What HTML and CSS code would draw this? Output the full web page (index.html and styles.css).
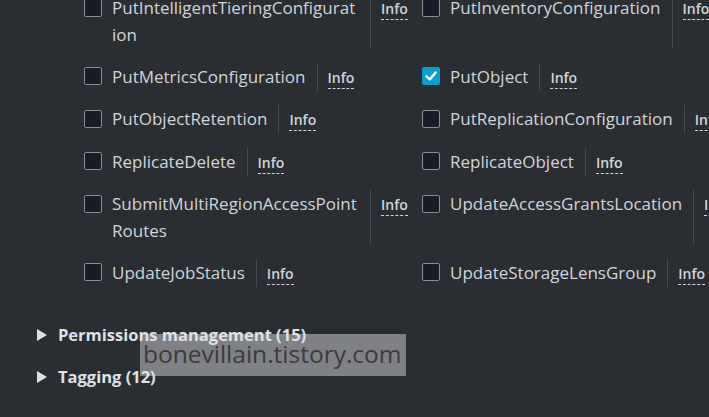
FILE: index.html
```html
<!DOCTYPE html>
<html lang="en">
<head>
  <meta charset="UTF-8">
  <title>Object actions</title>
  <link rel="stylesheet" href="styles.css">
</head>
<body>

<div class="action-grid">
  <div class="action">
    <span class="box"></span>
    <span class="name">PutIntelligentTieringConfiguration</span>
    <span class="info-wrap"><a class="info">Info</a></span>
  </div>
  <div class="action">
    <span class="box"></span>
    <span class="name">PutInventoryConfiguration</span>
    <span class="info-wrap"><a class="info">Info</a></span>
  </div>

  <div class="action">
    <span class="box"></span>
    <span class="name">PutMetricsConfiguration</span>
    <span class="info-wrap"><a class="info">Info</a></span>
  </div>
  <div class="action">
    <span class="box checked">
      <svg viewBox="0 0 18 18" width="18" height="18"><path d="M4.5 9.3 L7.7 12.4 L13.6 5.6" fill="none" stroke="#fff" stroke-width="2.4" stroke-linecap="round" stroke-linejoin="round"/></svg>
    </span>
    <span class="name">PutObject</span>
    <span class="info-wrap"><a class="info">Info</a></span>
  </div>

  <div class="action">
    <span class="box"></span>
    <span class="name">PutObjectRetention</span>
    <span class="info-wrap"><a class="info">Info</a></span>
  </div>
  <div class="action">
    <span class="box"></span>
    <span class="name">PutReplicationConfiguration</span>
    <span class="info-wrap"><a class="info">Info</a></span>
  </div>

  <div class="action">
    <span class="box"></span>
    <span class="name">ReplicateDelete</span>
    <span class="info-wrap"><a class="info">Info</a></span>
  </div>
  <div class="action">
    <span class="box"></span>
    <span class="name">ReplicateObject</span>
    <span class="info-wrap"><a class="info">Info</a></span>
  </div>

  <div class="action">
    <span class="box"></span>
    <span class="name">SubmitMultiRegionAccessPointRoutes</span>
    <span class="info-wrap"><a class="info">Info</a></span>
  </div>
  <div class="action">
    <span class="box"></span>
    <span class="name">UpdateAccessGrantsLocation</span>
    <span class="info-wrap"><a class="info">Info</a></span>
  </div>

  <div class="action">
    <span class="box"></span>
    <span class="name">UpdateJobStatus</span>
    <span class="info-wrap"><a class="info">Info</a></span>
  </div>
  <div class="action">
    <span class="box"></span>
    <span class="name">UpdateStorageLensGroup</span>
    <span class="info-wrap"><a class="info">Info</a></span>
  </div>
</div>

<div class="sections">
  <div class="section-head"><span class="caret"></span>Permissions management (15)</div>
  <div class="section-head"><span class="caret"></span>Tagging (12)</div>
</div>

<div class="watermark">bonevillain.tistory.com</div>

</body>
</html>
```

FILE: styles.css
```css
:root {
  --bg: #2a2d32;
  --text: #d1d5db;
  --line: #474b52;
}
html, body {
  margin: 0;
  padding: 0;
  height: 100%;
  overflow: hidden;
}
body {
  background: var(--bg);
  color: var(--text);
  font-family: "Open Sans", "Noto Sans", sans-serif;
  font-size: 17px;
  position: relative;
}
.action-grid {
  display: grid;
  grid-template-columns: 338px 338px;
  row-gap: 14.5px;
  padding-left: 84px;
  margin-top: -6px;
  width: 900px;
}
.action {
  display: flex;
  align-items: stretch;
  line-height: 27px;
}
.box {
  flex: none;
  width: 16px;
  height: 16px;
  margin-top: 4.5px;
  border: 1px solid #8b9098;
  border-radius: 2px;
  background: #161d26;
}
.box.checked {
  width: 18px;
  height: 18px;
  border: none;
  background: #0a9fcb;
}
.box.checked svg {
  display: block;
}
.name {
  margin-left: 10px;
  max-width: 247px;
  word-break: break-all;
}
.info-wrap {
  margin-left: 11px;
  padding-left: 10px;
  border-left: 1px solid var(--line);
  white-space: nowrap;
}
.info {
  font-size: 14px;
  font-weight: 600;
  border-bottom: 1px dashed var(--text);
  padding-bottom: 1px;
}
.sections {
  position: relative;
  z-index: 1;
  padding-left: 37px;
  margin-top: 34.5px;
  display: flex;
  flex-direction: column;
  gap: 15px;
}
.section-head {
  display: flex;
  align-items: center;
  font-weight: 700;
  font-size: 16.5px;
  line-height: 27px;
  color: #dfe2e6;
}
.caret {
  width: 0;
  height: 0;
  border-top: 6px solid transparent;
  border-bottom: 6px solid transparent;
  border-left: 10px solid #dfe2e6;
  margin-right: 11px;
}
.watermark {
  position: absolute;
  left: 140px;
  top: 334px;
  width: 266px;
  height: 42px;
  background: #808185;
  color: #3a3b3f;
  font-size: 24.5px;
  line-height: 40px;
  padding-left: 3px;
  box-sizing: border-box;
  white-space: nowrap;
  overflow: hidden;
}
```
